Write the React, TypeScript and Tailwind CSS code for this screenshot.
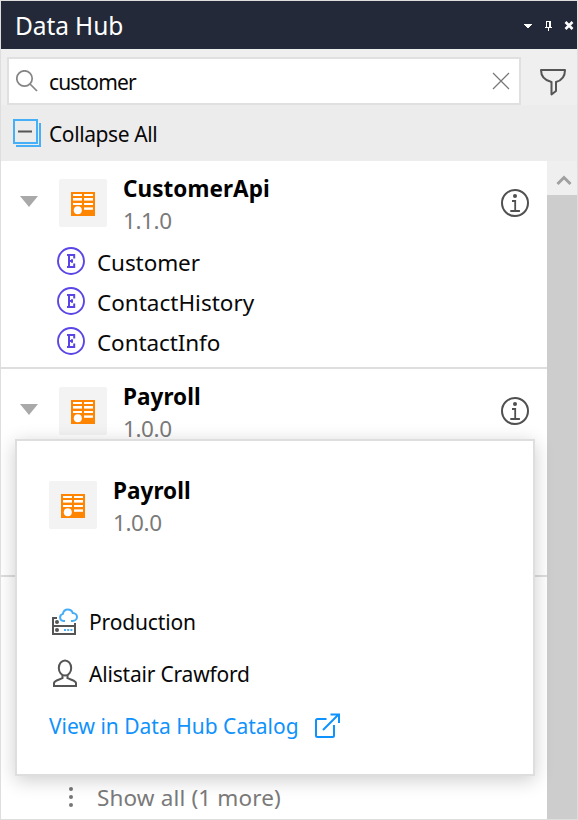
import React from 'react';

const FONT = 'font-["Noto_Sans","Open_Sans",sans-serif]';

function ServiceTile() {
  return (
    <div className="flex h-12 w-12 shrink-0 items-center justify-center rounded-[2px] bg-[#f3f3f3]">
      <svg width="24" height="24" viewBox="0 0 24 24" className="mt-0.5">
        <rect width="24" height="24" fill="#ff8500" />
        <g fill="#fff">
          <rect x="2" y="2" width="9" height="2" />
          <rect x="13" y="2" width="9" height="2" />
          <rect x="2" y="6" width="9" height="2.6" />
          <rect x="13" y="6" width="9" height="2.6" />
          <rect x="2" y="11" width="9" height="2" />
          <rect x="13" y="11" width="9" height="2" />
          <rect x="13" y="15.4" width="9" height="2.4" />
          <circle cx="6.8" cy="18.3" r="4" />
        </g>
      </svg>
    </div>
  );
}

function InfoIcon() {
  return (
    <svg width="28" height="28" viewBox="0 0 28 28" fill="none" stroke="#505050" strokeWidth="2">
      <circle cx="14" cy="14" r="13" />
      <circle cx="14" cy="7" r="2" fill="#505050" stroke="none" />
      <path d="M11 12h3.2v9.6M9.3 22h9.6" strokeWidth="1.8" />
    </svg>
  );
}

function EntityRow({ name, tracking }: { name: string; tracking: string }) {
  return (
    <div className="flex h-10 items-center pl-14">
      <svg width="28" height="28" viewBox="0 0 28 28" fill="none" stroke="#5a45e6" className="-mt-0.5">
        <circle cx="14" cy="14" r="13" strokeWidth="1.900" />
        <path d="M10 8h7.200v3.600M10 20h7.200v-3.600M12 8v12M12 14h3.500M15 12.200v3.600" strokeWidth="2" />
      </svg>
      <span className={`mt-0.5 ml-3 text-[22.5px] leading-10 ${tracking}`}>{name}</span>
    </div>
  );
}

function ServiceHead({ name, version }: { name: string; version: string }) {
  return (
    <div className="flex h-[81px] items-start pt-[18px] pl-[19px]">
      <svg width="18" height="11" viewBox="0 0 18 11" className="mt-[17px] mr-[21px] shrink-0">
        <path d="M0 0h18L9 11z" fill="#a9a9a9" />
      </svg>
      <ServiceTile />
      <div className="ml-4 flex flex-1 flex-col">
        <span className="-mt-1.5 text-[22.5px] leading-8 font-bold tracking-[0.05px] text-black">{name}</span>
        <span className="text-[22.5px] leading-8 tracking-[-0.4px] text-[#7a7a7a]">{version}</span>
      </div>
      <div className="mt-[10px] mr-[18px]">
        <InfoIcon />
      </div>
    </div>
  );
}

function Popup() {
  return (
    <div className="absolute top-[438px] left-[14px] h-[337px] w-[520px] border-2 border-[#dedede] bg-white px-8 pt-10 shadow-[0_4px_18px_rgba(0,0,0,0.2)]">
      <div className="flex h-[116px] items-start">
        <ServiceTile />
        <div className="ml-4 flex flex-col">
          <span className="-mt-1.5 text-[22.5px] leading-8 font-bold tracking-[0.05px] text-black">Payroll</span>
          <span className="text-[22.5px] leading-8 tracking-[-0.4px] text-[#7a7a7a]">1.0.0</span>
        </div>
      </div>
      <div className="flex h-[52px] items-center">
        <svg width="32" height="32" viewBox="0 0 32 32" fill="none" stroke="#555" strokeWidth="2">
          <path d="M8 11H4v16h22v-8M4 19h22v-3" />
          <circle cx="8" cy="15" r="2" fill="#555" stroke="none" />
          <circle cx="8" cy="23" r="2" fill="#555" stroke="none" />
          <path d="M15 23h2M18.2 23h2M21.4 23h2" stroke="#4aaef5" />
          <path d="M16 14h-1.500a3.600 3.600 0 0 1-.6-7.100c.5-3 2.600-4.400 4.900-4.400 2.300 0 4.200 1.300 4.900 3.500 2.400.1 4.300 1.800 4.300 4 0 2.300-2.100 4-4.500 4H22" stroke="#45adf5" />
        </svg>
        <span className="ml-2 text-[21px] tracking-[-0.15px]">Production</span>
      </div>
      <div className="flex h-[52px] items-center">
        <svg width="32" height="32" viewBox="0 0 32 32" fill="none" stroke="#555" strokeWidth="2">
          <ellipse cx="16" cy="9" rx="6.200" ry="7.500" />
          <path d="M13.500 16v3.200c-3 1.600-8.500 2.300-8.500 5V27h22v-2.800c0-2.700-5.500-3.400-8.500-5V16" />
        </svg>
        <span className="ml-2 text-[21px] tracking-[-0.2px]">Alistair Crawford</span>
      </div>
      <div className="flex h-[52px] items-center text-[#0f92fb]">
        <span className="w-[263px] text-[21px] whitespace-nowrap">View in Data Hub Catalog</span>
        <svg width="28" height="28" viewBox="0 0 28 28" fill="none" stroke="#0f92fb" strokeWidth="2" className="-mt-0.5">
          <path d="M14.500 7H5.500Q4 7 4 8.500v15Q4 25 5.500 25h15q1.500 0 1.500-1.500V13M11 18 26 3M18.500 2.500H27V11" />
        </svg>
      </div>
    </div>
  );
}

export default function App() {
  return (
    <div className={`relative flex h-[820px] w-[578px] flex-col overflow-hidden border border-[#dedede] bg-white text-[#080808] ${FONT}`}>
      <header className="flex h-12 shrink-0 items-center bg-[#232938] pl-3.5 text-white">
        <h1 className="mt-0.5 flex-1 text-[24.5px] leading-10 tracking-[-0.1px]">Data Hub</h1>
        <svg width="54" height="12" viewBox="0 0 54 12" shapeRendering="crispEdges" className="mt-px">
          <path d="M1 4h8v1H8v1H7v1H6v1H4V7H3V6H2V5H1z" fill="#fff" />
          <path d="M23.500 1v6M27.500 1v6M23 1.500H28M26.500 1v6M22 7.500H29M25.500 8v3" stroke="#fff" fill="none" />
          <path d="m42.500 2 7 7m0-7-7 7" stroke="#fff" strokeWidth="2.600" shapeRendering="auto" />
        </svg>
      </header>

      <div className="flex h-14 shrink-0 bg-[#efefef] pt-2 pl-1.5">
        <div className="flex h-12 w-[514px] items-center border-2 border-[#e0e0e0] bg-white">
          <svg width="22" height="22" viewBox="0 0 22 22" fill="none" stroke="#858585" strokeWidth="1.700" className="ml-[7px]">
            <circle cx="8.500" cy="8.500" r="7.700" />
            <path d="m14 14 7 7" />
          </svg>
          <span className="mt-1 ml-[11px] flex-1 text-[21px] tracking-[-0.85px]">customer</span>
          <svg width="18" height="18" viewBox="0 0 18 18" fill="none" stroke="#777" strokeWidth="1.200" className="mr-[9px]">
            <path d="m1 1 16 16M17 1 1 17" />
          </svg>
        </div>
        <svg width="28" height="28" viewBox="0 0 28 28" fill="none" stroke="#555" strokeWidth="2" className="mt-[11px] ml-[18px]">
          <path d="M2 2h24c0 7-3.500 10.500-9 12v9l-4.500 3.500V14C6 12.500 2 9 2 2z" strokeLinejoin="round" />
        </svg>
      </div>

      <div className="flex h-14 shrink-0 items-center bg-[#ececec] pl-3">
        <svg width="28" height="28" viewBox="0 0 28 28" fill="none" stroke="#47aef8" strokeWidth="2">
          <rect x="1" y="1" width="23" height="23" />
          <path d="M27 4v23H3" />
          <path d="M5 12.500h14" stroke="#555" />
        </svg>
        <span className="mt-1 ml-2 text-[21px] tracking-[-0.4px]">Collapse All</span>
      </div>

      <div className="flex min-h-0 flex-1">
        <main className="flex-1">
          <section className="h-[208px] border-b-2 border-[#dedede]">
            <ServiceHead name="CustomerApi" version="1.1.0" />
            <EntityRow name="Customer" tracking="tracking-[-0.1px]" />
            <EntityRow name="ContactHistory" tracking="tracking-[0px]" />
            <EntityRow name="ContactInfo" tracking="tracking-[-0.1px]" />
          </section>
          <section className="h-[208px] border-b-2 border-[#dedede]">
            <ServiceHead name="Payroll" version="1.0.0" />
          </section>
          <section className="flex h-[242px] items-end">
            <div className="flex h-11 items-center pl-[66px] text-[#7a7a7a]">
              <svg width="8" height="22" viewBox="0 0 8 22" fill="#777">
                <circle cx="4" cy="3" r="2" />
                <circle cx="4" cy="11" r="2" />
                <circle cx="4" cy="19" r="2" />
              </svg>
              <span className="mt-0.5 ml-[22px] text-[22.5px] tracking-[0.15px]">Show all (1 more)</span>
            </div>
          </section>
        </main>
        <aside className="flex w-[30px] flex-col bg-[#cdcdcd]">
          <div className="flex h-[34px] items-center justify-center bg-[#efefef]">
            <svg width="16" height="12" viewBox="0 0 16 12" fill="none" stroke="#a0a0a0" strokeWidth="3" className="mt-[3px] ml-[3px]">
              <path d="m1.500 10 6.500-6.500L14.500 10" />
            </svg>
          </div>
        </aside>
      </div>
      <Popup />
    </div>
  );
}
